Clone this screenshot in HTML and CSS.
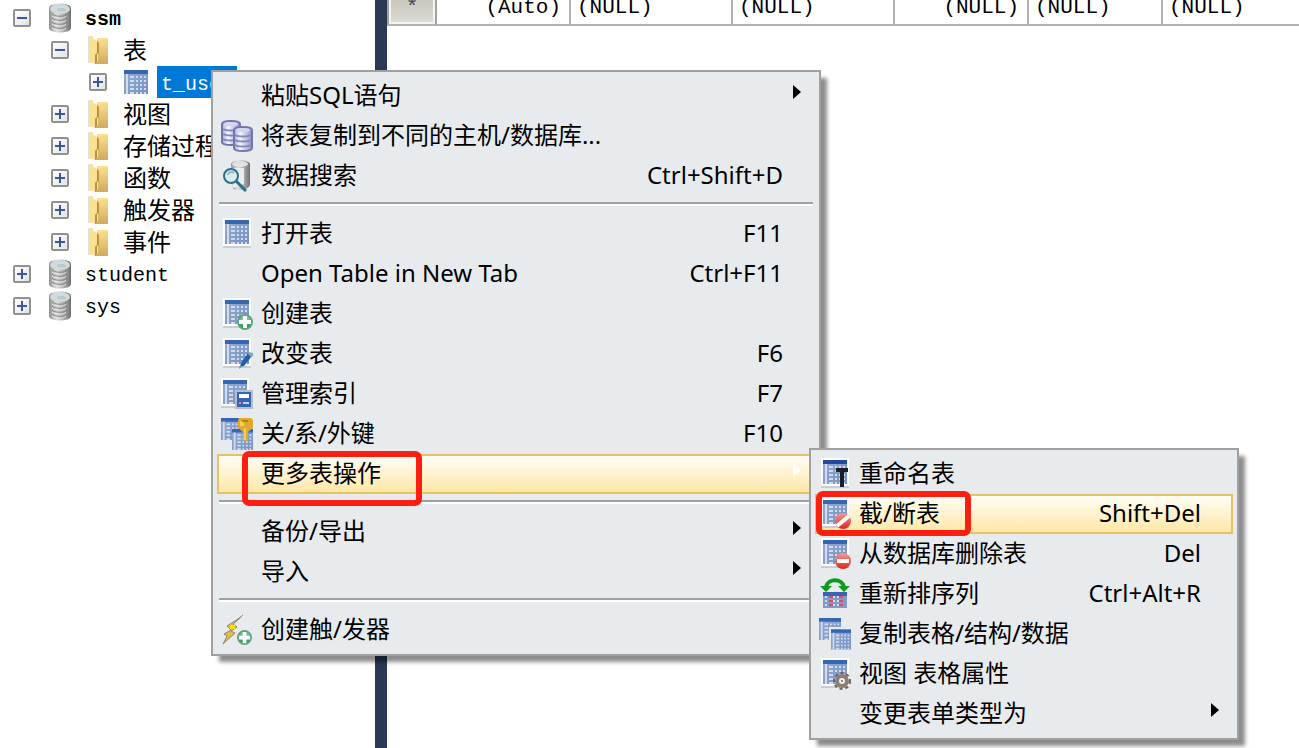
FILE: index.html
```html
<!DOCTYPE html>
<html lang="zh-CN">
<head>
    <meta charset="UTF-8">
    <meta name="viewport" content="width=device-width, initial-scale=1.0">
    <title>ssm - t_user</title>
    <link rel="stylesheet" href="styles.css">
</head>
<body>
    <svg class="defs" aria-hidden="true">
        <defs>
            <linearGradient id="metal">
                <stop offset="0" stop-color="#8b8b8b"/>
                <stop offset=".35" stop-color="#e2e2e2"/>
                <stop offset=".7" stop-color="#a8a8a8"/>
                <stop offset="1" stop-color="#6f6f6f"/>
            </linearGradient>
            <linearGradient id="lilac">
                <stop offset="0" stop-color="#a9abd6"/>
                <stop offset=".35" stop-color="#f6f6ff"/>
                <stop offset="1" stop-color="#8d90c4"/>
            </linearGradient>
            <linearGradient id="cells" x2="1" y2="1">
                <stop offset="0" stop-color="#95add6"/>
                <stop offset="1" stop-color="#7391c4"/>
            </linearGradient>
            <linearGradient id="paper" x2="0" y2="1">
                <stop offset="0" stop-color="#fbdf90"/>
                <stop offset="1" stop-color="#cfab5c"/>
            </linearGradient>
            <linearGradient id="red" x2="0" y2="1">
                <stop offset="0" stop-color="#f79a92"/>
                <stop offset="1" stop-color="#d8281d"/>
            </linearGradient>
            <linearGradient id="green" x2="0" y2="1">
                <stop offset="0" stop-color="#a9cfae"/>
                <stop offset="1" stop-color="#128a52"/>
            </linearGradient>
        </defs>
        <symbol id="grid" viewBox="0 0 24 24">
            <path fill="url(#cells)" d="M0 0h24v24H0z"/>
            <path fill="#3565b3" d="M0 0h24v4H0z"/>
            <path fill="#d5dce8" d="M2 4h2v20H2z"/>
            <path fill="none" stroke="#d5dce8" stroke-width="2" stroke-dasharray="4 2 2 2 2 2 2" d="M6 7h16M6 11h16M6 15h16M6 19h16M6 23h16"/>
        </symbol>
        <symbol id="table" viewBox="0 0 32 32">
            <path fill="#c9cdd1" d="M2 28h28v2H2z"/>
            <path fill="#fff" d="M2 0h28v28H2z"/>
            <use href="#grid" x="4" y="2" width="24" height="24"/>
        </symbol>
        <symbol id="plus" viewBox="0 0 16 16">
            <circle cx="8" cy="8" r="7" fill="url(#green)" stroke="#5da57a" stroke-width="2"/>
            <path fill="#fff" d="M6 2h4v4h4v4h-4v4H6v-4H2V6h4z"/>
        </symbol>
        <symbol id="db" viewBox="0 0 22 30">
            <path fill="url(#metal)" d="M0 5C0-1 22-1 22 5v20c0 6-22 6-22 0z"/>
            <path fill="none" stroke="#858585" d="M3 11c3 3 13 3 16 0M3 15c3 3 13 3 16 0M3 19c3 3 13 3 16 0M3 23c3 3 13 3 16 0"/>
            <path fill="none" stroke="#dedede" d="M3 13c3 3 12 3 14 0M3 17c3 3 12 3 14 0M3 21c3 3 12 3 14 0M3 25c3 3 12 3 14 0"/>
            <ellipse cx="11" cy="6" rx="10" ry="5" fill="#d3d8da"/>
            <path fill="#b3cbd0" d="M8 5h7l3 3H9z"/>
        </symbol>
        <symbol id="folder" viewBox="0 0 20 28">
            <path fill="#e2dfd8" d="M0 0h5v27H0z"/>
            <path fill="url(#paper)" d="M9 2h11v26H6z"/>
            <path fill="#fbe08d" d="M2 1l8 4v20l-3 3-5-3z"/>
            <path fill="#b8923f" d="M9 5l2 2v10l-2 1v8l-2 2v-9l2-2z"/>
        </symbol>
        <symbol id="cyl" viewBox="0 0 20 26">
            <path fill="url(#lilac)" stroke="#7376aa" stroke-width="2" d="M1 4c0-4 18-4 18 0v18c0 4-18 4-18 0z"/>
            <path fill="none" stroke="#8588ba" stroke-width="2" d="M2 9c3 2 13 2 16 0M2 14c3 2 13 2 16 0M2 19c3 2 13 2 16 0"/>
            <ellipse cx="10" cy="4" rx="7" ry="2" fill="#d5d6f2"/>
        </symbol>
    </svg>

    <div class="workspace">
        <nav class="tree" aria-label="数据库">
            <ul>
                <li>
                    <div class="node"><button class="toggle open" aria-label="ssm"></button><svg class="db"><use href="#db"/></svg><span class="name bold">ssm</span></div>
                    <ul>
                        <li>
                            <div class="node"><button class="toggle open" aria-label="表"></button><svg class="folder"><use href="#folder"/></svg><span class="name">表</span></div>
                            <ul>
                                <li><div class="node"><button class="toggle" aria-label="t_user"></button><svg class="grid-icon"><use href="#grid"/></svg><span class="name selected">t_user</span></div></li>
                            </ul>
                        </li>
                        <li><div class="node"><button class="toggle" aria-label="视图"></button><svg class="folder"><use href="#folder"/></svg><span class="name">视图</span></div></li>
                        <li><div class="node"><button class="toggle" aria-label="存储过程"></button><svg class="folder"><use href="#folder"/></svg><span class="name">存储过程</span></div></li>
                        <li><div class="node"><button class="toggle" aria-label="函数"></button><svg class="folder"><use href="#folder"/></svg><span class="name">函数</span></div></li>
                        <li><div class="node"><button class="toggle" aria-label="触发器"></button><svg class="folder"><use href="#folder"/></svg><span class="name">触发器</span></div></li>
                        <li><div class="node"><button class="toggle" aria-label="事件"></button><svg class="folder"><use href="#folder"/></svg><span class="name">事件</span></div></li>
                    </ul>
                </li>
                <li><div class="node"><button class="toggle" aria-label="student"></button><svg class="db"><use href="#db"/></svg><span class="name">student</span></div></li>
                <li><div class="node"><button class="toggle" aria-label="sys"></button><svg class="db"><use href="#db"/></svg><span class="name">sys</span></div></li>
            </ul>
        </nav>
        <div class="splitter"></div>
        <main class="result">
            <table>
                <colgroup>
                    <col class="mark"><col class="narrow"><col class="wide"><col class="wide"><col class="narrow"><col class="narrow"><col>
                </colgroup>
                <tr>
                    <th scope="row">*</th>
                    <td class="num">(Auto)</td>
                    <td>(NULL)</td>
                    <td>(NULL)</td>
                    <td class="num">(NULL)</td>
                    <td>(NULL)</td>
                    <td>(NULL)</td>
                </tr>
            </table>
        </main>
    </div>

    <ul class="menu context">
        <li><button class="item"><span class="icon"></span><span class="text">粘贴SQL语句</span><i class="arrow"></i></button></li>
        <li><button class="item">
            <svg class="icon" viewBox="0 0 32 32"><use href="#cyl" width="20" height="26"/><use href="#cyl" x="12" y="6" width="20" height="26"/></svg>
            <span class="text">将表复制到不同的主机/数据库...</span></button></li>
        <li><button class="item">
            <svg class="icon" viewBox="0 0 32 32">
                <path fill="url(#metal)" d="M10 4c2-5 17-5 19 0v21c-2 5-11 6-17 4z"/>
                <ellipse cx="19" cy="4" rx="8" ry="3" fill="#dfe3e3"/>
                <path fill="#e9eded" d="M11 8h12v16l-11 4z"/>
                <circle cx="10" cy="16" r="7" fill="#dceaf0" stroke="#2b7088" stroke-width="2"/>
                <path fill="none" stroke="#94b8c6" stroke-width="2" d="M7 15c0-3 4-4 6-2"/>
                <path stroke="#2b7088" stroke-width="3" d="M15 21l10 10"/>
            </svg>
            <span class="text">数据搜索</span><kbd class="text">Ctrl+Shift+D</kbd></button></li>
        <li class="line"></li>
        <li><button class="item"><svg class="icon"><use href="#table"/></svg><span class="text">打开表</span><kbd class="text">F11</kbd></button></li>
        <li><button class="item"><span class="icon"></span><span class="text">Open Table in New Tab</span><kbd class="text">Ctrl+F11</kbd></button></li>
        <li><button class="item">
            <svg class="icon" viewBox="0 0 32 32"><use href="#table" width="32" height="32"/><use href="#plus" x="16" y="16" width="16" height="16"/></svg>
            <span class="text">创建表</span></button></li>
        <li><button class="item">
            <svg class="icon" viewBox="0 0 32 32">
                <use href="#table"/>
                <path fill="#1d62a8" d="M27 15l4 3-8 10-4 1 1-4z"/>
                <path fill="#8aa0b4" d="M28 14l4 1v3l-2 1-3-3zM18 28l3 1-3 2z"/>
            </svg>
            <span class="text">改变表</span><kbd class="text">F6</kbd></button></li>
        <li><button class="item">
            <svg class="icon" viewBox="0 0 32 32">
                <use href="#table" x="-2"/>
                <path fill="#b9bec6" d="M14 12h18v19H14z"/>
                <path fill="#3465b5" d="M16 14h14v15H16z"/>
                <path fill="#fff" d="M18 16h10v4H18z"/>
                <path fill="#f0839a" d="M18 24h2v2h-2z"/>
                <path fill="#c3d2ee" d="M22 24h6v2h-6z"/>
            </svg>
            <span class="text">管理索引</span><kbd class="text">F7</kbd></button></li>
        <li><button class="item">
            <svg class="icon" viewBox="0 0 32 32">
                <use href="#grid" width="22" height="22"/>
                <use href="#grid" x="11" y="11" width="21" height="21"/>
                <path fill="#e0a92c" d="M18 0h12l2 2v8l-5 4v8l-2 2-3-3v-7l-5-4V2z"/>
                <path fill="#f4ce5d" d="M23 10h2v12h-2zM19 3h4v5h-4z"/>
                <path fill="#b57c1c" d="M21 2h6v2h-6z"/>
            </svg>
            <span class="text">关/系/外键</span><kbd class="text">F10</kbd></button></li>
        <li class="parent">
            <button class="item active"><span class="icon"></span><span class="text">更多表操作</span><i class="arrow"></i></button>
            <span class="mark-box more"></span>
            <ul class="menu submenu">
                <li><button class="item">
                    <svg class="icon" viewBox="0 0 32 32">
                        <use href="#table"/>
                        <path fill="#1f4aa0" d="M4 2h24v4H4z"/>
                        <path fill="#1b2027" d="M17 10h12v4h-4v15h-4V14h-4z"/>
                    </svg>
                    <span class="text">重命名表</span></button></li>
                <li class="parent"><button class="item active">
                    <svg class="icon" viewBox="0 0 32 32">
                        <use href="#table"/>
                        <circle cx="24" cy="23" r="8" fill="url(#red)"/>
                        <path stroke="#fff" stroke-width="4" d="M18 28l12-10"/>
                    </svg>
                    <span class="text">截/断表</span><kbd class="text">Shift+Del</kbd></button>
                    <span class="mark-box truncate"></span></li>
                <li><button class="item">
                    <svg class="icon" viewBox="0 0 32 32">
                        <use href="#table"/>
                        <circle cx="24" cy="23" r="8" fill="url(#red)"/>
                        <path fill="#fff" d="M18 21h12v4H18z"/>
                    </svg>
                    <span class="text">从数据库删除表</span><kbd class="text">Del</kbd></button></li>
                <li><button class="item">
                    <svg class="icon" viewBox="0 0 32 32">
                        <path fill="#7f9bcb" d="M4 14h24v16H4z"/>
                        <path fill="#3565b3" d="M4 14h24v4H4z"/>
                        <path stroke="#d5dce8" stroke-width="2" stroke-dasharray="2 2" d="M6 19h20M6 23h20M6 27h20"/>
                        <path stroke="#f4453e" stroke-width="2" stroke-dasharray="4 6 4 9" d="M10 19h14M10 23h14M10 27h14"/>
                        <path fill="none" stroke="#109a1a" stroke-width="4" d="M7 9C9 0 23 0 25 9"/>
                        <path fill="#109a1a" d="M1 8h12l-6 6zM19 8h12l-6 6z"/>
                    </svg>
                    <span class="text">重新排序列</span><kbd class="text">Ctrl+Alt+R</kbd></button></li>
                <li><button class="item">
                    <svg class="icon" viewBox="0 0 32 32">
                        <use href="#grid" width="22" height="22"/>
                        <path fill="#e8ebee" d="M10 9h22v2H12v11h-2z"/>
                        <use href="#grid" x="12" y="11" width="20" height="21"/>
                    </svg>
                    <span class="text">复制表格/结构/数据</span></button></li>
                <li><button class="item">
                    <svg class="icon" viewBox="0 0 32 32">
                        <use href="#table"/>
                        <circle cx="23" cy="23" r="8" fill="none" stroke="#6f625e" stroke-width="2" stroke-dasharray="3 3"/>
                        <circle cx="23" cy="23" r="5" fill="#f3f1f0" stroke="#8b7d78" stroke-width="4"/>
                        <circle cx="23" cy="23" r="1" fill="#6f625e"/>
                    </svg>
                    <span class="text">视图 表格属性</span></button></li>
                <li><button class="item"><span class="icon"></span><span class="text">变更表单类型为</span><i class="arrow"></i></button></li>
            </ul>
        </li>
        <li class="line"></li>
        <li><button class="item"><span class="icon"></span><span class="text">备份/导出</span><i class="arrow"></i></button></li>
        <li><button class="item"><span class="icon"></span><span class="text">导入</span><i class="arrow"></i></button></li>
        <li class="line"></li>
        <li><button class="item">
            <svg class="icon" viewBox="0 0 32 32">
                <path fill="none" stroke="#8a8a84" stroke-width="1" d="M22 1L12 10"/>
                <path fill="#e6b650" stroke="#8f8878" stroke-width="1" d="M20 3L6 12l4 4-7 4 3 2-4 8 12-11-4-2 6-4-4-3z"/>
                <path fill="#f8e400" d="M9 11h5v4H9z"/>
                <use href="#plus" x="16" y="16" width="15" height="15"/>
            </svg>
            <span class="text">创建触/发器</span></button></li>
    </ul>
</body>
</html>
```
FILE: styles.css
```css
body {
    margin: 0;
    background-color: white;
    color: black;
    overflow: hidden;
}

ul {
    list-style: none;
    margin: 0;
    padding: 0;
}

button {
    font: inherit;
    color: inherit;
    margin: 0;
    padding: 0;
    border: 0;
    background: none;
}

.defs {
    position: absolute;
    width: 0;
    height: 0;
}

.workspace {
    display: flex;
    height: 100vh;
}

/* object tree */
.tree {
    flex: 0 0 362px;
    padding: 2px 0 0 13px;
    font-family: "Liberation Mono", "Noto Sans CJK SC", monospace;
    font-size: 20px;
}

.tree ul ul {
    padding-left: 38px;
}

.node {
    display: flex;
    align-items: center;
    height: 32px;
}

.node svg {
    margin: 0 7px 0 15px;
    flex: none;
}

.node .db {
    width: 22px;
    height: 30px;
    padding: 0 3px;
}

.node .folder {
    width: 20px;
    height: 28px;
    padding: 0 4px;
}

.node .grid-icon {
    width: 24px;
    height: 24px;
    padding: 0 2px;
}

.toggle {
    flex: none;
    width: 18px;
    height: 18px;
    border: 2px solid #919191;
    border-radius: 2px;
    background:
        linear-gradient(#3a56a0, #3a56a0) center / 10px 2px no-repeat,
        linear-gradient(#3a56a0, #3a56a0) center / 2px 10px no-repeat,
        linear-gradient(135deg, #ffffff, #e2e2e2);
}

.toggle.open {
    background:
        linear-gradient(#3a56a0, #3a56a0) center / 10px 2px no-repeat,
        linear-gradient(135deg, #ffffff, #e2e2e2);
}

.name {
    padding: 4px 4px 0;
    line-height: 28px;
    white-space: nowrap;
}

.tree ul ul .name {
    padding-top: 6px;
    line-height: 26px;
    font-size: 24px;
}

.bold {
    font-weight: bold;
}

.tree ul ul .selected {
    font-size: 20px;
    background-color: #0078d7;
    color: white;
}

.splitter {
    flex: 0 0 12px;
    background-color: #293955;
}

/* result grid */
.result {
    flex: 1;
    min-width: 0;
}

.result table {
    width: 100%;
    table-layout: fixed;
    border-collapse: separate;
    border-spacing: 0;
    font-family: "Liberation Mono", monospace;
    font-size: 21px;
    line-height: 16px;
}

.mark {
    width: 50px;
}

.narrow {
    width: 134px;
}

.wide {
    width: 162px;
}

.result td,
.result th {
    height: 16px;
    padding: 0 6px 8px;
    border-right: 2px solid #b2b2b2;
    border-bottom: 2px solid #b2b2b2;
    text-align: left;
    white-space: nowrap;
}

.result th {
    padding: 0 0 8px;
    border-left: 2px solid #a0a0a0;
    border-right-color: #a0a0a0;
    background: linear-gradient(#c9c7bc, #dddcd6);
    box-shadow: inset 2px -2px #f4f4f2, inset -2px 0 #f4f4f2;
    text-align: center;
    font-weight: normal;
    color: #444444;
}

.result .num {
    padding-right: 8px;
    text-align: right;
}

.result td:last-child {
    border-right: 0;
}

/* menus */
.menu {
    position: absolute;
    box-sizing: border-box;
    padding: 4px;
    border: 2px solid #a0a0a0;
    background-color: #e8ebee;
    box-shadow: 7px 7px 4px -1px rgba(0, 0, 0, 0.45);
    font-family: "Noto Sans", "Noto Sans CJK SC", sans-serif;
    font-size: 24px;
}

.context {
    left: 211px;
    top: 70px;
    width: 610px;
}

.submenu {
    left: calc(100% - 6px);
    top: -6px;
    width: 430px;
}

.parent {
    position: relative;
}

.item {
    display: flex;
    align-items: center;
    gap: 8px;
    box-sizing: border-box;
    width: 100%;
    height: 40px;
    padding: 0 30px 0 2px;
    border: 2px solid transparent;
    white-space: nowrap;
}

.item.active {
    border-color: #e5c365;
    background: linear-gradient(#fffdf6, #ffe8a6) padding-box;
}

.icon {
    flex: none;
    width: 32px;
    height: 32px;
}

.text {
    padding-bottom: 2px;
    line-height: 34px;
}

.item kbd {
    margin-left: auto;
    font-family: inherit;
    font-size: 24px;
}

.arrow {
    margin: 0 -18px 8px auto;
    border: 7px solid transparent;
    border-left: 8px solid black;
    border-right: 0;
}

.context > .parent > .active .arrow {
    border-left-color: white;
}

.line {
    height: 2px;
    margin: 6px 2px 8px;
    border-top: 2px solid #a0a0a0;
    background-color: white;
}

/* red outlines over the two chosen entries */
.mark-box {
    position: absolute;
    z-index: 1;
    box-sizing: border-box;
    border: 6px solid #ff1f10;
    border-radius: 7px;
    pointer-events: none;
}

.more {
    left: 25px;
    top: -3px;
    width: 180px;
    height: 55px;
}

.truncate {
    left: 1px;
    top: -3px;
    width: 155px;
    height: 45px;
}
```
